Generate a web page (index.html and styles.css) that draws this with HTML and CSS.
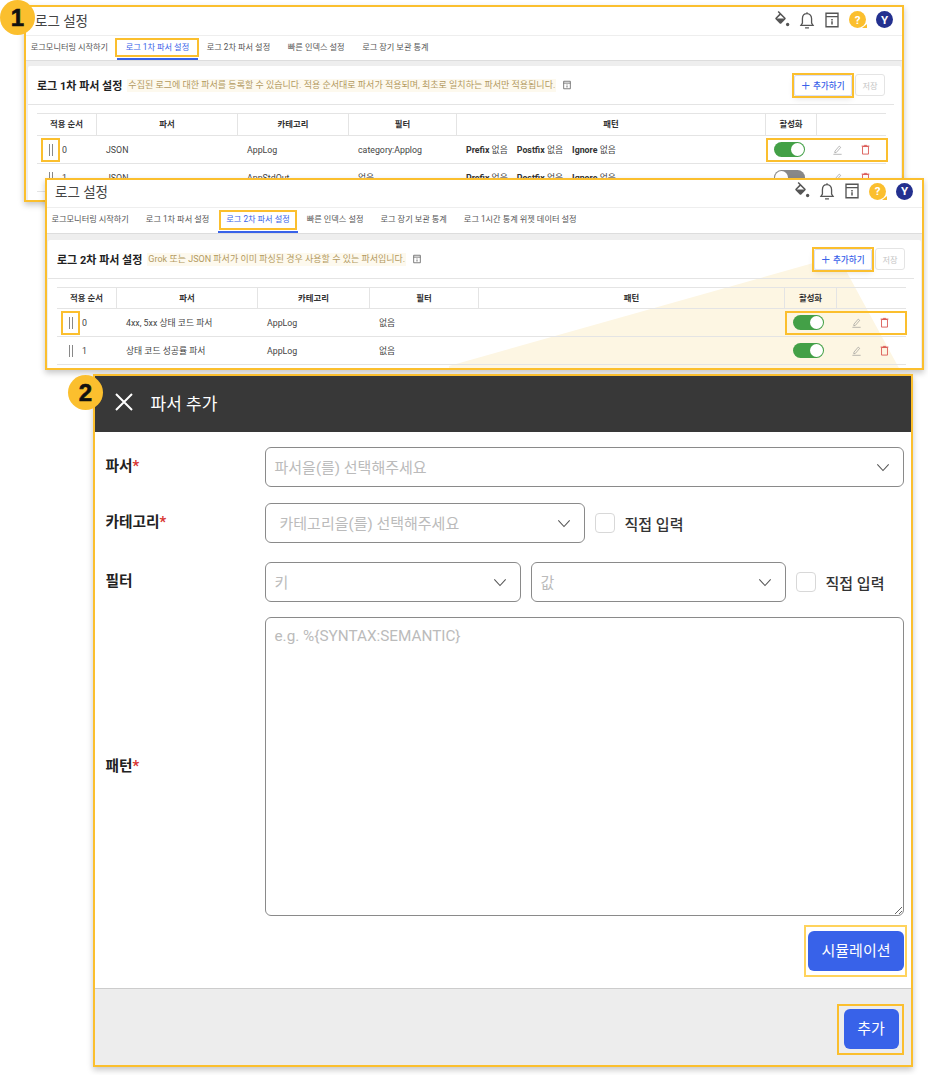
FILE: index.html
```html
<!DOCTYPE html>
<html lang="ko">
<head>
  <meta charset="UTF-8">
  <meta name="viewport" content="width=device-width,initial-scale=1.0">
  <title>로그 설정</title>
  <link rel="stylesheet" href="styles.css">
</head>
<body>

  <!-- 아이콘 모음 -->
  <svg class="sprite" aria-hidden="true">
    <symbol id="i-bucket" viewBox="0 0 24 24"><path fill="currentColor" d="M16.56 8.94 7.62 0 6.21 1.41l2.38 2.38-5.15 5.15a1.5 1.5 0 0 0 0 2.12l5.5 5.5a1.5 1.5 0 0 0 2.12 0l5.5-5.5a1.5 1.5 0 0 0 0-2.12zM5.21 10 10 5.21 14.79 10H5.21z"/><circle fill="currentColor" cx="19.5" cy="18" r="2.2"/></symbol>
    <symbol id="i-bell" viewBox="2 0 20 22"><path fill="none" stroke="currentColor" stroke-width="1.6" d="M12 3.2c-3.6 0-5.6 2.8-5.6 6.2v5.4L4.6 17.6h14.8l-1.8-2.8V9.4c0-3.4-2-6.2-5.6-6.2zM12 1.5v1.7M9.6 20.6h4.8"/></symbol>
    <symbol id="i-info" viewBox="0 0 24 24"><path fill="none" stroke="currentColor" stroke-width="1.8" d="M4 3h16v18H4zM4 7.5h16"/><path fill="currentColor" d="M11 10.5h2v2h-2zM11 13.5h2V18h-2z"/></symbol>
    <symbol id="i-pencil" viewBox="0 0 24 24"><path fill="none" stroke="currentColor" stroke-width="1.3" d="M6.5 15.5 15.8 4.6l3.2 2.7-9.3 10.9-3.7 1zM3 22.5h18"/></symbol>
    <symbol id="i-trash" viewBox="0 0 24 24"><path fill="none" stroke="currentColor" stroke-width="1.9" d="M5.5 5.5h13V22h-13zM3.5 4.5h17M9 3h6"/></symbol>
    <symbol id="i-chevron" viewBox="0 0 16 10"><path fill="none" stroke="currentColor" stroke-width="1.2" d="M1.5 1.5 8 8.5l6.5-7"/></symbol>
  </svg>

  <!-- 1: 로그 1차 파서 설정 -->
  <section class="window window-first">
    <header class="topbar">
      <h1>로그 설정</h1>
      <div class="topbar-icons">
        <svg class="ico"><use href="#i-bucket"/></svg>
        <svg class="ico"><use href="#i-bell"/></svg>
        <svg class="ico"><use href="#i-info"/></svg>
        <span class="help">?</span>
        <span class="avatar">Y</span>
      </div>
    </header>
    <nav class="tabs">
      <a>로그모니터링 시작하기</a>
      <a class="active">로그 1차 파서 설정</a>
      <a>로그 2차 파서 설정</a>
      <a>빠른 인덱스 설정</a>
      <a>로그 장기 보관 통계</a>
    </nav>
    <div class="content">
      <div class="card">
        <div class="card-head">
          <h2>로그 1차 파서 설정</h2>
          <span class="desc">수집된 로그에 대한 파서를 등록할 수 있습니다. 적용 순서대로 파서가 적용되며, 최초로 일치하는 파서만 적용됩니다.</span>
          <svg class="ico-small"><use href="#i-info"/></svg>
          <button class="btn-add"><span class="plus">+</span>추가하기</button>
          <button class="btn-save">저장</button>
        </div>
        <div class="table">
          <div class="row row-head">
            <div>적용 순서</div><div>파서</div><div>카테고리</div><div>필터</div><div>패턴</div><div>활성화</div><div></div>
          </div>
          <div class="row">
            <div class="order"><span class="grip hl"><i></i><i></i></span>0</div>
            <div class="cell">JSON</div>
            <div class="cell">AppLog</div>
            <div class="cell">category:Applog</div>
            <div class="cell pattern"><span><b>Prefix</b> 없음</span><span><b>Postfix</b> 없음</span><span><b>Ignore</b> 없음</span></div>
            <div class="actions hl">
              <span class="toggle"></span>
              <svg class="ico-edit"><use href="#i-pencil"/></svg>
              <svg class="ico-del"><use href="#i-trash"/></svg>
            </div>
          </div>
          <div class="row">
            <div class="order"><span class="grip"><i></i><i></i></span>1</div>
            <div class="cell">JSON</div>
            <div class="cell">AppStdOut</div>
            <div class="cell">없음</div>
            <div class="cell pattern"><span><b>Prefix</b> 없음</span><span><b>Postfix</b> 없음</span><span><b>Ignore</b> 없음</span></div>
            <div class="actions">
              <span class="toggle off"></span>
              <svg class="ico-edit"><use href="#i-pencil"/></svg>
              <svg class="ico-del"><use href="#i-trash"/></svg>
            </div>
          </div>
        </div>
      </div>
    </div>
  </section>

  <!-- 2: 로그 2차 파서 설정 -->
  <section class="window window-second">
    <header class="topbar">
      <h1>로그 설정</h1>
      <div class="topbar-icons">
        <svg class="ico"><use href="#i-bucket"/></svg>
        <svg class="ico"><use href="#i-bell"/></svg>
        <svg class="ico"><use href="#i-info"/></svg>
        <span class="help">?</span>
        <span class="avatar">Y</span>
      </div>
    </header>
    <nav class="tabs">
      <a>로그모니터링 시작하기</a>
      <a>로그 1차 파서 설정</a>
      <a class="active">로그 2차 파서 설정</a>
      <a>빠른 인덱스 설정</a>
      <a>로그 장기 보관 통계</a>
      <a>로그 1시간 통계 위젯 데이터 설정</a>
    </nav>
    <div class="content">
      <div class="card">
        <!-- 추가하기 버튼에서 아래 창으로 이어지는 빛줄기 -->
        <svg class="beam" viewBox="0 0 872 130"><polygon points="790,16 401,126 401,130 852,130"/></svg>
        <div class="card-head">
          <h2>로그 2차 파서 설정</h2>
          <span class="desc">Grok 또는 JSON 파서가 이미 파싱된 경우 사용할 수 있는 파서입니다.</span>
          <svg class="ico-small"><use href="#i-info"/></svg>
          <button class="btn-add"><span class="plus">+</span>추가하기</button>
          <button class="btn-save">저장</button>
        </div>
        <div class="table">
          <div class="row row-head">
            <div>적용 순서</div><div>파서</div><div>카테고리</div><div>필터</div><div>패턴</div><div>활성화</div><div></div>
          </div>
          <div class="row">
            <div class="order"><span class="grip hl"><i></i><i></i></span>0</div>
            <div class="cell">4xx, 5xx 상태 코드 파서</div>
            <div class="cell">AppLog</div>
            <div class="cell">없음</div>
            <div class="cell"></div>
            <div class="actions hl">
              <span class="toggle"></span>
              <svg class="ico-edit"><use href="#i-pencil"/></svg>
              <svg class="ico-del"><use href="#i-trash"/></svg>
            </div>
          </div>
          <div class="row">
            <div class="order"><span class="grip"><i></i><i></i></span>1</div>
            <div class="cell">상태 코드 성공률 파서</div>
            <div class="cell">AppLog</div>
            <div class="cell">없음</div>
            <div class="cell"></div>
            <div class="actions">
              <span class="toggle"></span>
              <svg class="ico-edit"><use href="#i-pencil"/></svg>
              <svg class="ico-del"><use href="#i-trash"/></svg>
            </div>
          </div>
        </div>
      </div>
    </div>
  </section>

  <!-- 3: 파서 추가 패널 -->
  <section class="window window-panel">
    <header class="panel-head">
      <svg class="panel-close" viewBox="0 0 18 18"><path d="M1 1l16 16M17 1 1 17"/></svg>
      <h2>파서 추가</h2>
    </header>
    <div class="panel-body">
      <div class="field field-parser">
        <label>파서<em>*</em></label>
        <div class="select select-wide">파서을(를) 선택해주세요<svg class="chevron"><use href="#i-chevron"/></svg></div>
      </div>
      <div class="field field-category">
        <label>카테고리<em>*</em></label>
        <div class="select select-category">카테고리을(를) 선택해주세요<svg class="chevron"><use href="#i-chevron"/></svg></div>
        <span class="check"></span>
        <span class="check-label">직접 입력</span>
      </div>
      <div class="field field-filter">
        <label>필터</label>
        <div class="select select-half">키<svg class="chevron"><use href="#i-chevron"/></svg></div>
        <div class="select select-half">값<svg class="chevron"><use href="#i-chevron"/></svg></div>
        <span class="check"></span>
        <span class="check-label">직접 입력</span>
      </div>
      <div class="field field-pattern">
        <label>패턴<em>*</em></label>
        <textarea placeholder="e.g. %{SYNTAX:SEMANTIC}"></textarea>
      </div>
      <div class="panel-actions">
        <button class="btn-primary btn-sim">시뮬레이션</button>
      </div>
    </div>
    <footer class="panel-foot">
      <button class="btn-primary btn-submit">추가</button>
    </footer>
  </section>

  <!-- 번호 배지 -->
  <span class="badge badge-one">1</span>
  <span class="badge badge-two">2</span>

</body>
</html>
```

FILE: styles.css
```css
:root {
  --yellow: #fbbf2e;
  --blue: #3862e9;
  --line: #e4e4e4;
  --text: #444;
}

* {
  margin: 0;
  padding: 0;
  box-sizing: border-box;
}

body {
  width: 928px;
  height: 1075px;
  position: relative;
  overflow: hidden;
  background: #fff;
  color: var(--text);
  font-family: Roboto, "Noto Sans CJK KR", sans-serif;
}

.sprite {
  display: none;
}

/* 창 세 개: 자유 배치 */
.window {
  position: absolute;
  display: flex;
  flex-direction: column;
  overflow: hidden;
  background: #fff;
  border: 2px solid var(--yellow);
  box-shadow: 0 3px 6px rgba(0, 0, 0, 0.22);
}

.window-first {
  left: 24px;
  top: 5px;
  width: 880px;
  height: 197px;
  --cols: 60px 141px 111px 108px 309px 51px 71px;
}

.window-second {
  left: 45px;
  top: 178px;
  width: 879px;
  height: 192px;
  --cols: 60px 141px 112px 109px 306px 52px 70px;
}

.window-panel {
  left: 93px;
  top: 374px;
  width: 820px;
  height: 693px;
  border-width: 2.5px;
}

/* 상단 바 */
.topbar {
  height: 29px;
  flex: none;
  display: flex;
  align-items: center;
  justify-content: space-between;
  padding: 0 9px 3px 9px;
  border-bottom: 1px solid #eee;
}

.window-second .topbar {
  height: 28px;
  padding: 0 9px 5px 8px;
}

.topbar h1 {
  font-size: 13.5px;
  font-weight: 400;
  color: #444;
}

.topbar-icons {
  display: flex;
  align-items: center;
  gap: 7px;
}

.ico {
  width: 18px;
  height: 18px;
  color: #555;
}

.help,
.avatar {
  position: relative;
  width: 17px;
  height: 17px;
  border-radius: 50%;
  display: flex;
  align-items: center;
  justify-content: center;
  color: #fff;
  font-size: 11.5px;
  font-weight: 700;
}

.help {
  background: var(--yellow);
  margin-left: 1px;
}

/* 말풍선 꼬리 */
.help::after {
  content: "";
  position: absolute;
  right: -1px;
  bottom: 0;
  border-left: 5px solid transparent;
  border-bottom: 4px solid var(--yellow);
}

.avatar {
  background: #23308f;
  margin-left: 3px;
}

/* 탭 */
.tabs {
  height: 24px;
  flex: none;
  display: flex;
  margin-left: -4px;
}

.window-second .tabs {
  height: 25px;
}

.tabs a {
  padding: 0 8.8px;
  font-size: 8.2px;
  line-height: 23px;
  color: #555;
  white-space: nowrap;
}

.window-second .tabs a {
  padding: 0 8.5px;
}

.tabs a.active {
  position: relative;
  color: var(--blue);
  border-bottom: 2px solid var(--blue);
}

/* 강조 테두리 */
.tabs a.active::after {
  content: "";
  position: absolute;
  left: -2px;
  right: -1px;
  top: 2px;
  bottom: 1px;
  border: 2px solid var(--yellow);
}

.window-second .tabs a.active::after {
  left: 1px;
  right: 1px;
  bottom: 1px;
}

.content {
  flex: 1;
  background: #eee;
  border-top: 1px solid #ddd;
  padding: 5px 1px 0 2px;
  overflow: hidden;
}

.window-second .content {
  padding: 6px 1px 0 1px;
}

.card {
  position: relative;
  height: 100%;
  background: #fff;
  border-radius: 2px 2px 0 0;
  overflow: hidden;
}

.beam {
  position: absolute;
  left: 0;
  top: 0;
  width: 872px;
  height: 130px;
}

.beam polygon {
  fill: #fdf6e3;
}

.card-head {
  position: relative;
  height: 39px;
  margin-right: 7px;
  display: flex;
  align-items: center;
  padding: 0 9px;
  border-bottom: 1px solid var(--line);
}

.card-head h2 {
  font-size: 11px;
  font-weight: 700;
  color: #222;
  white-space: nowrap;
}

.desc {
  margin-left: 5px;
  padding: 0 1px;
  font-size: 9px;
  line-height: 13px;
  color: #b3995f;
  background: #fdf9ee;
  white-space: nowrap;
}

.ico-small {
  width: 10px;
  height: 10px;
  margin-left: 6px;
  color: #555;
}

.btn-add {
  position: relative;
  margin-left: auto;
  width: 58px;
  height: 21px;
  display: flex;
  align-items: center;
  justify-content: center;
  gap: 3px;
  background: #fff;
  border: 1px solid #d8e0f8;
  border-radius: 2px;
  color: var(--blue);
  font: 500 8.6px Roboto, "Noto Sans CJK KR", sans-serif;
  box-shadow: 0 3px 6px rgba(0, 0, 0, 0.1);
}

.btn-add::after {
  content: "";
  position: absolute;
  inset: -3px -3px -3px -3px;
  border: 2px solid var(--yellow);
}

.plus {
  font-size: 15px;
  font-weight: 300;
  line-height: 1;
}

.btn-save {
  margin-left: 3px;
  width: 30px;
  height: 22px;
  background: #fff;
  border: 1px solid #e4e4e4;
  border-radius: 3px;
  color: #c4c4c4;
  font: 400 8.2px Roboto, "Noto Sans CJK KR", sans-serif;
}

.hl {
  outline: 2px solid var(--yellow);
}

/* 표 */
.table {
  position: relative;
  margin: 8px 15px 0 9px;
}

.row {
  display: grid;
  grid-template-columns: var(--cols);
  height: 28px;
  align-items: center;
  font-size: 8.8px;
  color: #444;
  border-bottom: 1px solid var(--line);
}

.row-head {
  height: 23px;
  align-items: stretch;
  border-top: 1px solid var(--line);
  font-size: 8.4px;
  font-weight: 700;
  color: #333;
  text-align: center;
  line-height: 21px;
}

.window-second .row-head {
  height: 22px;
}

.row-head > div {
  border-right: 1px solid var(--line);
}

.row-head > div:last-child {
  border-right: 0;
}

.order {
  display: flex;
  align-items: center;
}

.grip {
  width: 15px;
  height: 20px;
  margin: 0 4px 0 6px;
  display: flex;
  align-items: center;
  justify-content: center;
  gap: 2px;
}

.grip i {
  width: 1px;
  height: 12px;
  background: #888;
}

.cell {
  padding-left: 9px;
  white-space: nowrap;
}

.pattern {
  display: flex;
  gap: 9px;
}

.pattern b {
  font-weight: 700;
  color: #333;
}

.actions {
  grid-column: 6 / 8;
  height: 24px;
  display: flex;
  align-items: center;
  padding-left: 8px;
}

.actions.hl {
  outline-offset: -2px;
}

.toggle {
  position: relative;
  width: 31px;
  height: 15px;
  border-radius: 8px;
  background: #43a047;
}

.toggle::after {
  content: "";
  position: absolute;
  right: 1px;
  top: 1px;
  width: 13px;
  height: 13px;
  border-radius: 50%;
  background: #fff;
}

.toggle.off {
  background: #888;
}

.toggle.off::after {
  right: auto;
  left: 1px;
}

.ico-edit,
.ico-del {
  width: 11px;
  height: 11px;
}

.ico-edit {
  margin-left: 27px;
  color: #8c8c8c;
}

.ico-del {
  margin-left: 17px;
  color: #d9534f;
}

/* 파서 추가 패널 */
.panel-head {
  height: 56px;
  flex: none;
  display: flex;
  align-items: center;
  background: #383838;
  color: #fff;
  padding: 0 0 4px 19.5px;
}

.panel-close {
  width: 18px;
  height: 18px;
  fill: none;
  stroke: #fff;
  stroke-width: 2;
}

.panel-head h2 {
  margin-left: 18px;
  font-size: 17px;
  font-weight: 400;
}

.panel-body {
  flex: 1;
  padding: 15px 7px 0 10.5px;
}

.field {
  display: flex;
  align-items: center;
  gap: 10px;
}

.field label {
  width: 149px;
  padding-bottom: 5px;
  font-size: 14.7px;
  font-weight: 700;
  color: #222;
}

.field-filter label {
  padding-bottom: 6px;
}

.field-pattern label {
  padding-bottom: 4px;
}

.field label em {
  color: #d8342f;
  font-style: normal;
}

.field-category {
  margin-top: 16px;
}

.field-filter {
  margin-top: 19px;
}

.field-pattern {
  margin-top: 15px;
}

.select {
  position: relative;
  height: 40px;
  display: flex;
  align-items: center;
  padding: 0 9px 2px;
  border: 1px solid #8a8a8a;
  border-radius: 6px;
  font-size: 15px;
  color: #bbb;
  background: #fff;
}

.select-wide {
  width: 639px;
}

.select-category {
  width: 320px;
  padding-left: 14px;
}

.select-half {
  width: 256px;
}

.select-half + .select-half {
  width: 255px;
}

.chevron {
  position: absolute;
  right: 13px;
  top: 15px;
  width: 14px;
  height: 9px;
  color: #555;
}

.check {
  width: 20px;
  height: 20px;
  border: 1px solid #d8d8d8;
  border-radius: 4px;
}

.check-label {
  font-size: 15px;
  font-weight: 500;
  color: #333;
  white-space: nowrap;
}

textarea {
  width: 639px;
  height: 299px;
  padding: 9px;
  border: 1px solid #8a8a8a;
  border-radius: 6px;
  font: 15.3px Roboto, "Noto Sans CJK KR", sans-serif;
  outline: 0;
}

textarea::placeholder {
  color: #bbb;
}

.panel-actions {
  display: flex;
  justify-content: flex-end;
  margin-top: 15px;
}

.btn-primary {
  position: relative;
  height: 40px;
  padding-bottom: 3px;
  background: var(--blue);
  border: 0;
  border-radius: 6px;
  color: #fff;
  font: 400 15px Roboto, "Noto Sans CJK KR", sans-serif;
}

.btn-primary::after {
  content: "";
  position: absolute;
}

.btn-sim {
  width: 96px;
}

.btn-sim::after {
  inset: -6px -3px -6px -4px;
  border: 2px solid #ffd35c;
}

.btn-submit {
  width: 55px;
}

.btn-submit::after {
  inset: -5px -5px -6px -7px;
  border: 2px solid var(--yellow);
}

.panel-foot {
  height: 77px;
  flex: none;
  display: flex;
  justify-content: flex-end;
  padding: 20px 12.5px 0 0;
  background: #ededed;
  border-top: 1px solid #ccc;
}

/* 번호 배지 */
.badge {
  position: absolute;
  width: 35px;
  height: 35px;
  border-radius: 50%;
  background: var(--yellow);
  color: #111;
  display: flex;
  align-items: center;
  justify-content: center;
  font: 700 24px "Liberation Sans", sans-serif;
  -webkit-text-stroke: 0.6px #111;
}

.badge-one {
  left: 0;
  top: 0;
}

.badge-two {
  left: 68px;
  top: 375px;
}
```
